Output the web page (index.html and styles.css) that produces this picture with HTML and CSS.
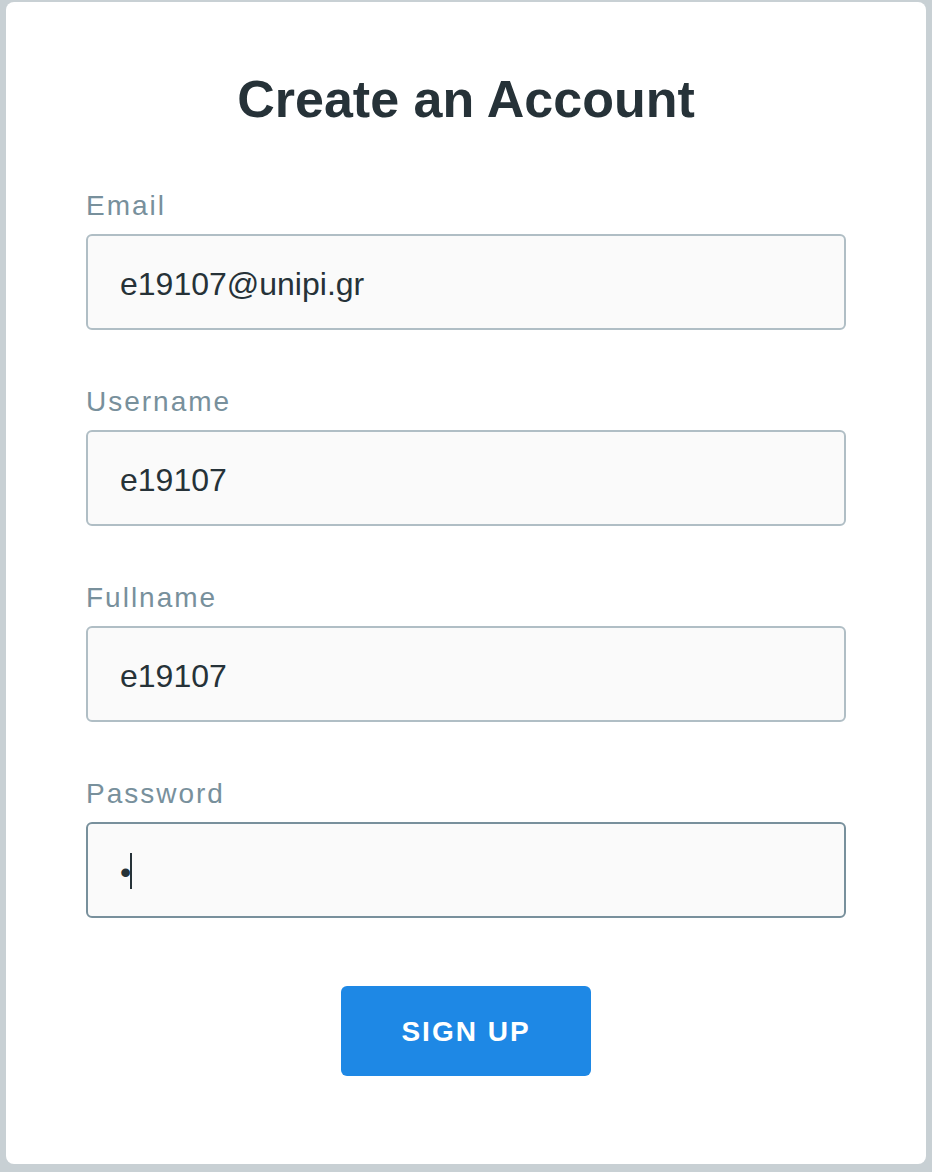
FILE: index.html
```html
<!DOCTYPE html>
<html lang="en">
<head>
<meta charset="utf-8">
<title>Create an Account</title>
<link rel="stylesheet" href="styles.css">
</head>
<body>
<main class="card">
  <h1 class="title">Create an Account</h1>
  <form class="form">
    <div class="field">
      <label class="label" for="email">Email</label>
      <input class="input" id="email" type="text" value="e19107@unipi.gr">
    </div>
    <div class="field">
      <label class="label" for="username">Username</label>
      <input class="input" id="username" type="text" value="e19107">
    </div>
    <div class="field">
      <label class="label" for="fullname">Fullname</label>
      <input class="input" id="fullname" type="text" value="e19107">
    </div>
    <div class="field">
      <label class="label" for="password">Password</label>
      <div class="input-wrap">
        <input class="input input-focus" id="password" type="password" value="x">
        <span class="caret"></span>
      </div>
    </div>
    <div class="actions">
      <button class="btn" type="button">SIGN UP</button>
    </div>
  </form>
</main>
</body>
</html>
```

FILE: styles.css
```css
html, body {
  margin: 0;
  padding: 0;
}
body {
  background: #c8d0d4;
  padding: 2px 6px 8px 6px;
  font-family: "Liberation Sans", Arial, sans-serif;
}
.card {
  width: 920px;
  height: 1162px;
  box-sizing: border-box;
  background: #ffffff;
  border-radius: 8px;
  padding: 67px 80px 0 80px;
}
.title {
  margin: 0;
  font-size: 52px;
  line-height: 60px;
  font-weight: 700;
  color: #263238;
  text-align: center;
}
.form {
  margin-top: 61px;
  display: flex;
  flex-direction: column;
  gap: 56px;
}
.field {
  display: flex;
  flex-direction: column;
  gap: 12px;
}
.label {
  font-size: 28px;
  line-height: 32px;
  letter-spacing: 2px;
  color: #78909c;
}
.input-wrap {
  position: relative;
}
.input {
  display: block;
  width: 760px;
  height: 96px;
  box-sizing: border-box;
  border: 2px solid #b0bec5;
  border-radius: 6px;
  background: #fafafa;
  padding: 5px 32px 0 32px;
  font-family: "Liberation Sans", Arial, sans-serif;
  font-size: 32px;
  color: #263238;
  outline: none;
  margin: 0;
}
.input-focus {
  border-color: #78909c;
}
.caret {
  position: absolute;
  left: 44px;
  top: 31px;
  width: 2px;
  height: 36px;
  background: #263238;
}
.actions {
  display: flex;
  justify-content: center;
  margin-top: 12px;
}
.btn {
  width: 250px;
  height: 90px;
  border: none;
  border-radius: 6px;
  background: #1e88e5;
  color: #ffffff;
  font-family: "Liberation Sans", Arial, sans-serif;
  font-size: 28px;
  font-weight: 700;
  letter-spacing: 2px;
  padding: 2px 0 0 0;
  cursor: pointer;
}
```
